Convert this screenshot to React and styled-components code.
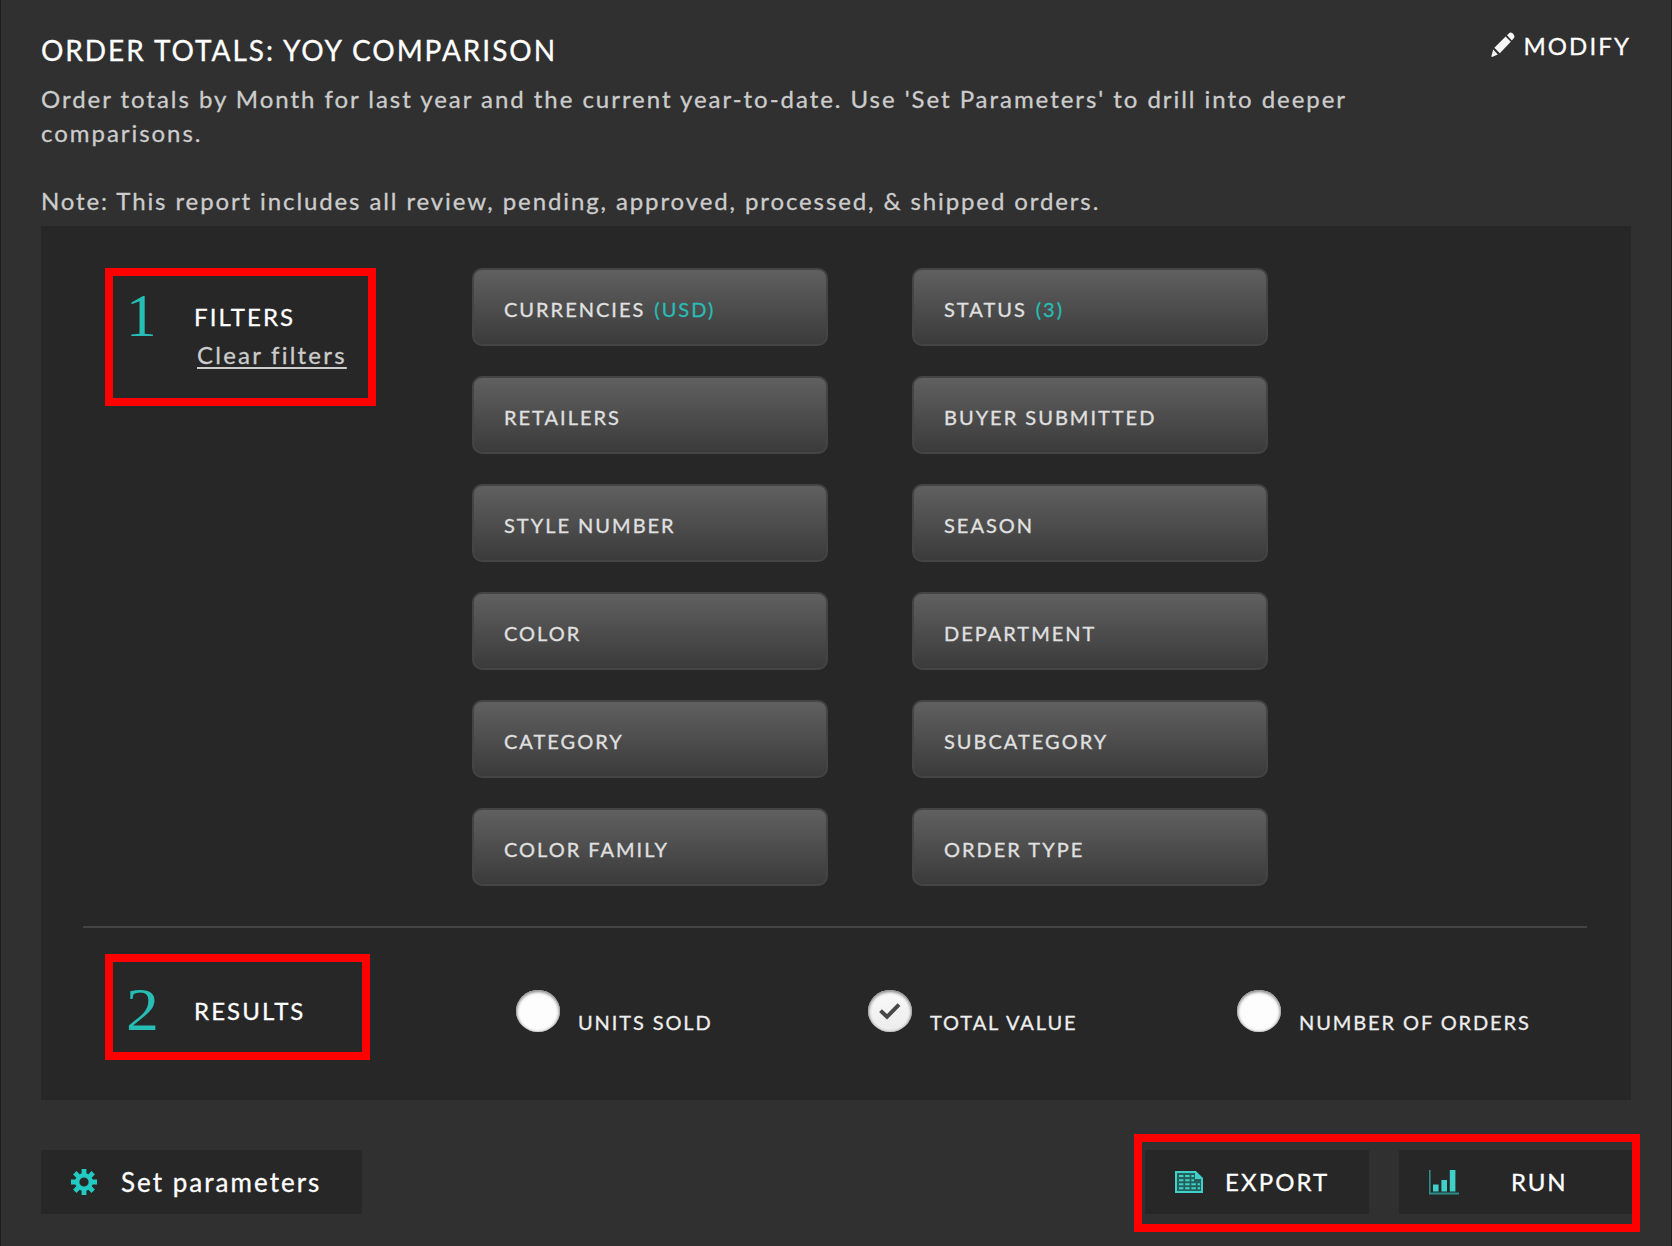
import React, { useState } from 'react'
import styled, { createGlobalStyle } from 'styled-components';

const filters = [
  { label: 'CURRENCIES', value: '(USD)' },
  { label: 'STATUS', value: '(3)' },
  { label: 'RETAILERS' },
  { label: 'BUYER SUBMITTED' },
  { label: 'STYLE NUMBER' },
  { label: 'SEASON' },
  { label: 'COLOR' },
  { label: 'DEPARTMENT' },
  { label: 'CATEGORY' },
  { label: 'SUBCATEGORY' },
  { label: 'COLOR FAMILY' },
  { label: 'ORDER TYPE' },
];

const results = [
  { label: 'UNITS SOLD', width: 352 },
  { label: 'TOTAL VALUE', width: 369 },
  { label: 'NUMBER OF ORDERS', width: 300 },
];

const PencilIcon = () => (
  <PencilSvg width="24" height="26" viewBox="0 0 24 26" fill="#f6f6f6">
    <path d="M16 3.2 L18.6 0.8 Q20 0 21.4 1.2 L23 3 Q24 4.6 23 6 L20.8 8.4 Z" />
    <path d="M14.6 4.4 L19.8 9.8 L8.8 21.2 L3.4 15.8 Z" />
    <path d="M2.2 17.6 L6.8 22.4 L1.6 24.8 Q0.4 25.2 0.4 24 Z" />
  </PencilSvg>
);

const GearIcon = () => (
  <svg width="26" height="26" viewBox="0 0 26 26" stroke="#22cac4" fill="none">
    <circle cx="13" cy="13" r="6.8" strokeWidth="4.4" />
    {[0, 45, 90, 135].map((deg) => (
      <path key={deg} d="M13 0V5M13 21V26" strokeWidth="4.8" transform={`rotate(${deg} 13 13)`} />
    ))}
  </svg>
);

const SheetIcon = () => (
  <svg width="28" height="22" viewBox="0 0 28 22">
    <path d="M1 1H20.5L27 7.5V21H1Z" fill="#25605d" stroke="#3fd0c9" strokeWidth="2" />
    <path d="M20 1V8H27Z" fill="#3fd0c9" />
    <path d="M4 5H19M4 9.2H19M4 13.2H25M4 17.2H25" stroke="#3fd0c9" strokeWidth="2" strokeDasharray="4.4 1.8" />
  </svg>
);

const ChartIcon = () => (
  <svg width="30" height="25" viewBox="0 0 30 25" fill="#3fd0c9">
    <path d="M0 0H1.6V22.6H30V24.4H0Z" fill="#2a8d89" />
    <rect x="4" y="14.5" width="5.6" height="7" />
    <rect x="12.4" y="10" width="5.6" height="11.5" />
    <rect x="20.8" y="0" width="5.6" height="21.5" />
  </svg>
);

const CheckIcon = () => (
  <svg width="22" height="18" viewBox="0 0 22 18" fill="none" stroke="#484848" strokeWidth="4">
    <path d="M1.5 8.6L8 14.8L20 2.6" />
  </svg>
);

const App = () => {
  const [selected, setSelected] = useState('TOTAL VALUE');

  return (
    <>
    <GlobalStyle />
    <PageWrapper>
      <PageHeader>
        <div>
          <Title>ORDER TOTALS: YOY COMPARISON</Title>
          <Description>
            Order totals by Month for last year and the current year-to-date. Use 'Set Parameters' to drill into deeper comparisons.
          </Description>
          <Description $note>
            Note: This report includes all review, pending, approved, processed, &amp; shipped orders.
          </Description>
        </div>
        <ModifyButton><PencilIcon />MODIFY</ModifyButton>
      </PageHeader>

      <Panel>
        <FilterSection>
          <StepBox $width={271} $height={138}>
            <StepNumber $top={9}>1</StepNumber>
            <StepText $top={25}>
              <StepTitle>FILTERS</StepTitle>
              <ClearLink>Clear filters</ClearLink>
            </StepText>
          </StepBox>
          <FilterGrid>
            {filters.map((filter) => (
              <FilterButton key={filter.label}>
                {filter.label}
                {filter.value && <FilterValue>{filter.value}</FilterValue>}
              </FilterButton>
            ))}
          </FilterGrid>
        </FilterSection>

        <ResultSection>
          <StepBox $width={265} $height={106}>
            <StepNumber $top={17} $wide>2</StepNumber>
            <StepText $top={33}>
              <StepTitle>RESULTS</StepTitle>
            </StepText>
          </StepBox>
          <ResultList>
            {results.map(({ label, width }) => (
              <ResultOption key={label} $width={width} onClick={() => setSelected(label)}>
                <Radio $checked={selected === label}>{selected === label && <CheckIcon />}</Radio>
                <ResultLabel>{label}</ResultLabel>
              </ResultOption>
            ))}
          </ResultList>
        </ResultSection>
      </Panel>

      <PageFooter>
        <FooterButton $width={321} $gap={24} $size={26} $spacing={2.03}><GearIcon />Set parameters</FooterButton>
        <ActionGroup>
          <FooterButton $width={224} $gap={22} $size={24} $spacing={2.1}><SheetIcon /><ActionLabel>EXPORT</ActionLabel></FooterButton>
          <FooterButton $width={233} $gap={52} $size={24} $spacing={1.8}><ChartIcon /><ActionLabel>RUN</ActionLabel></FooterButton>
          <ActionFrame />
        </ActionGroup>
      </PageFooter>
    </PageWrapper>
    </>
  )
}

const GlobalStyle = createGlobalStyle`
  * {
    box-sizing: border-box;
  }

  body {
    margin: 0;
    background: #303030;
    font-family: Lato, sans-serif;
    -webkit-text-stroke: 0.3px currentColor;
  }

  button {
    font-family: inherit;
    border: none;
    padding: 0;
    cursor: pointer;
  }

  svg {
    flex: none;
    display: block;
  }
`;

const PencilSvg = styled.svg`
  filter: blur(0.5px);
`;

const PageWrapper = styled.div`
  width: 1672px;
  height: 1246px;
  padding: 0 40px;
  border-left: 1px solid #1e1e1e;
  border-right: 1px solid #1e1e1e;
  background: #303030;
  overflow: hidden;
`;

const PageHeader = styled.header`
  display: flex;
  justify-content: space-between;
  height: 226px;
`;

const Title = styled.h1`
  margin: 33px 0 0;
  color: #ffffff;
  font-size: 28px;
  font-weight: 400;
  line-height: 34px;
  letter-spacing: 1.95px;
`;

const Description = styled.p`
  width: 1330px;
  margin: ${({ $note }) => ($note ? '34px' : '15px')} 0 0;
  color: #cccccc;
  font-size: 24px;
  line-height: 34px;
  letter-spacing: ${({ $note }) => ($note ? '1.89px' : '1.96px')};
`;

const ModifyButton = styled.button`
  display: flex;
  align-items: center;
  gap: 8px;
  height: 30px;
  margin-top: 30px;
  background: none;
  color: #ffffff;
  font-size: 24px;
  letter-spacing: 2.1px;
  white-space: nowrap;
`;

const Panel = styled.main`
  width: 1590px;
  height: 874px;
  padding: 42px 44px 0 42px;
  background: #272727;
`;

const FilterSection = styled.section`
  display: flex;
  height: 660px;
  padding-left: 22px;
  border-bottom: 2px solid #444444;
`;

const StepBox = styled.div`
  display: flex;
  flex: none;
  width: ${({ $width }) => $width}px;
  height: ${({ $height }) => $height}px;
  border: 8px solid #ff0000;
`;

const StepNumber = styled.span`
  width: 81px;
  margin-top: ${({ $top }) => $top}px;
  padding-left: 13px;
  color: #26bdb5;
  font-family: "Liberation Serif", serif;
  font-size: 61px;
  line-height: 61px;
  -webkit-text-stroke: 0;
  transform: ${({ $wide }) => ($wide ? 'scaleX(1.08)' : 'none')};
  transform-origin: 14px 0;
`;

const StepText = styled.div`
  margin-top: ${({ $top }) => $top}px;
`;

const StepTitle = styled.h2`
  margin: 0;
  color: #ffffff;
  font-size: 24px;
  font-weight: 400;
  line-height: 32px;
  letter-spacing: 2.1px;
`;

const ClearLink = styled.a`
  display: block;
  margin: 6px 0 0 3px;
  color: #cccccc;
  font-size: 24px;
  line-height: 32px;
  letter-spacing: 2.23px;
  text-decoration: underline;
  text-decoration-thickness: 2px;
  text-underline-offset: 3px;
  white-space: nowrap;
  cursor: pointer;
`;

const FilterGrid = styled.div`
  display: grid;
  grid-template-columns: 356px 356px;
  grid-auto-rows: 78px;
  gap: 30px 84px;
  margin-left: 96px;
`;

const FilterButton = styled.button`
  padding: 4px 0 0 30px;
  border: 2px solid #444444;
  border-radius: 10px;
  background: linear-gradient(#606060, #3b3b3b);
  color: #e0e0e0;
  font-size: 20px;
  letter-spacing: 2px;
  text-align: left;
`;

const FilterValue = styled.span`
  margin-left: 9px;
  color: #26bdb5;
`;

const ResultSection = styled.section`
  display: flex;
  padding: 26px 0 0 22px;
`;

const ResultList = styled.div`
  display: flex;
  margin: 36px 0 0 146px;
`;

const ResultOption = styled.div`
  display: flex;
  width: ${({ $width }) => $width}px;
  height: 44px;
  cursor: pointer;
`;

const Radio = styled.span`
  display: flex;
  align-items: center;
  justify-content: center;
  width: 44px;
  height: 42px;
  border-radius: 50%;
  background: ${({ $checked }) => ($checked ? 'linear-gradient(#fafafa, #ececec)' : '#fdfdfd')};
  box-shadow: inset 0 1px 3px 1px #8a8a8a;
`;

const ResultLabel = styled.span`
  margin: 19px 0 0 18px;
  color: #eeeeee;
  font-size: 20px;
  line-height: 26px;
  letter-spacing: 1.9px;
  white-space: nowrap;
`;

const PageFooter = styled.footer`
  display: flex;
  justify-content: space-between;
  width: 1591px;
  margin-top: 50px;
`;

const FooterButton = styled.button`
  display: flex;
  align-items: center;
  gap: ${({ $gap }) => $gap}px;
  width: ${({ $width }) => $width}px;
  height: 64px;
  padding-left: 30px;
  background: #272727;
  color: #ffffff;
  font-size: ${({ $size }) => $size}px;
  letter-spacing: ${({ $spacing }) => $spacing}px;
  white-space: nowrap;
`;

const ActionLabel = styled.span`
  padding-bottom: 2px;
`;

const ActionGroup = styled.div`
  position: relative;
  display: flex;
  gap: 30px;
`;

// sits on top of both buttons, wider than the group
const ActionFrame = styled.div`
  position: absolute;
  top: -16px;
  left: -11px;
  width: 506px;
  height: 98px;
  border: 8px solid #ff0000;
  pointer-events: none;
`;

export default App
